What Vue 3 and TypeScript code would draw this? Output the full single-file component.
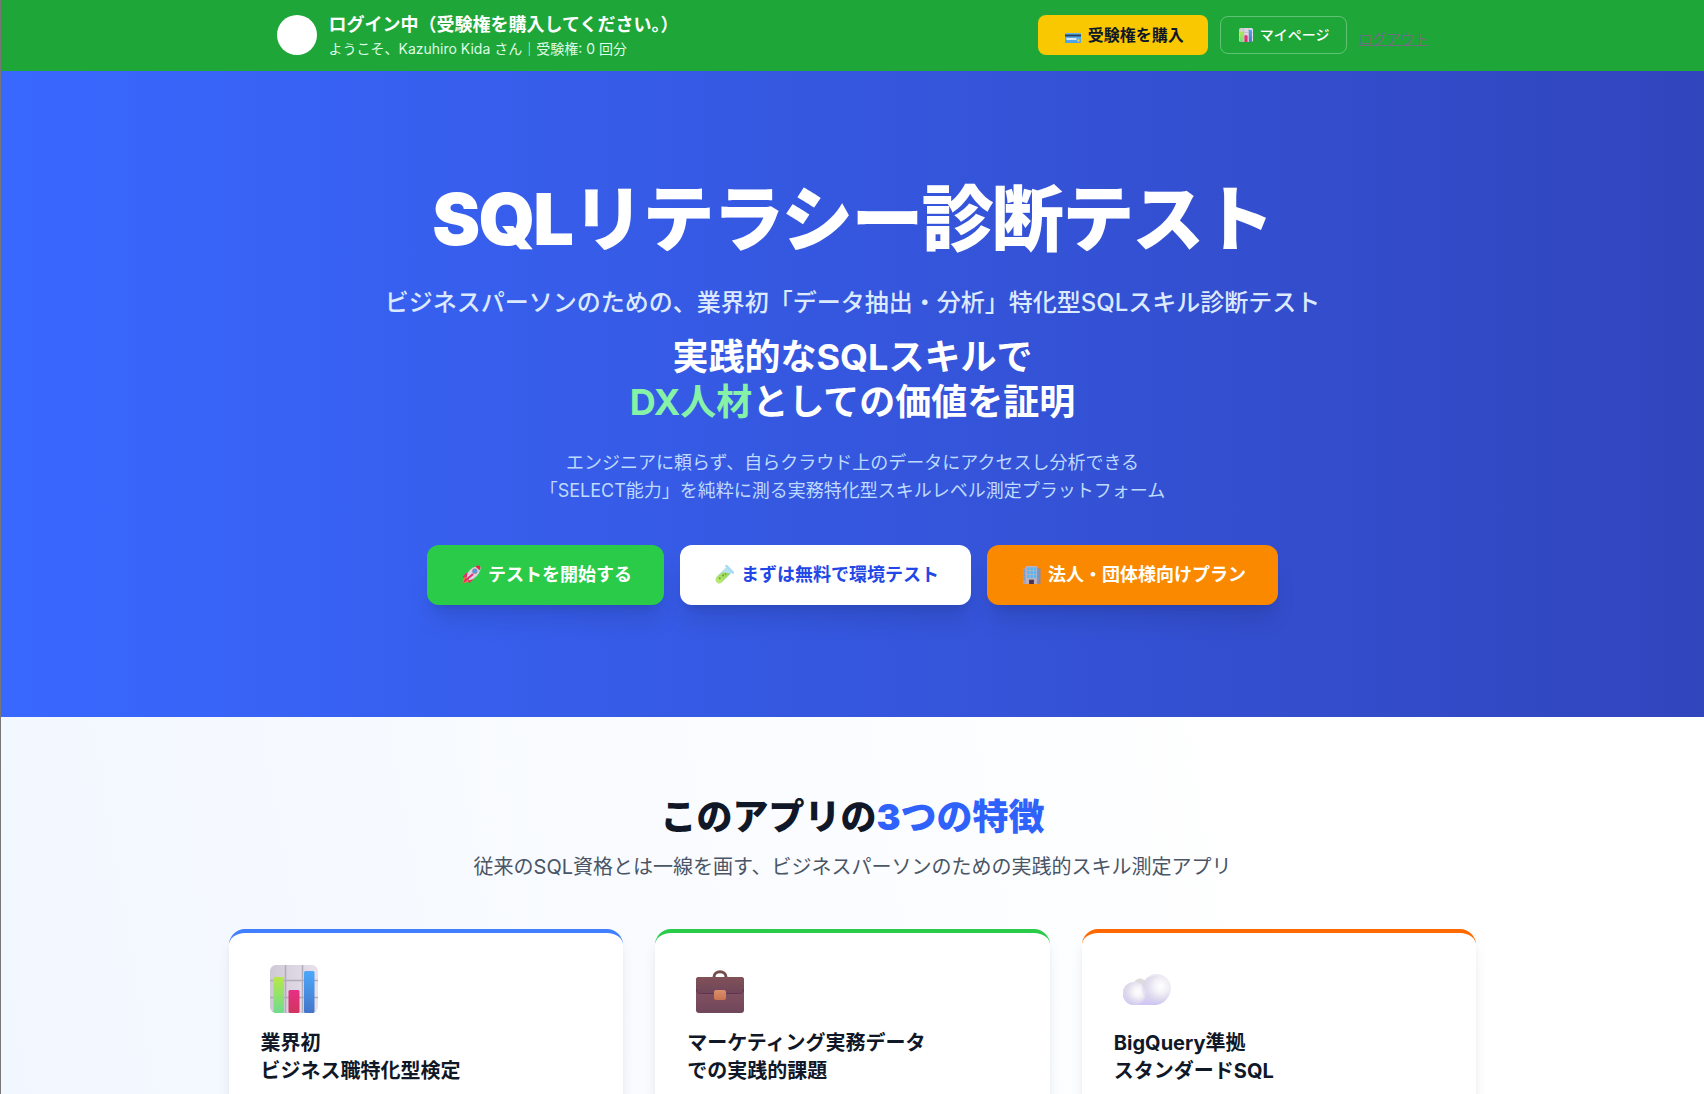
<script setup lang="ts">
interface Feature {
  icon: string
  tone: string
  lines: string[]
}

const userName = 'Kazuhiro Kida'
const tickets = 0

const actions = [
  { icon: 'rocket', tone: 'start', label: 'テストを開始する' },
  { icon: 'tube', tone: 'trial', label: 'まずは無料で環境テスト' },
  { icon: 'office', tone: 'corporate', label: '法人・団体様向けプラン' },
]

const features: Feature[] = [
  { icon: 'chart', tone: 'blue', lines: ['業界初', 'ビジネス職特化型検定'] },
  { icon: 'briefcase', tone: 'green', lines: ['マーケティング実務データ', 'での実践的課題'] },
  { icon: 'cloud', tone: 'orange', lines: ['BigQuery準拠', 'スタンダードSQL'] },
]
</script>

<template>
  <div class="page">
    <svg class="sprite" aria-hidden="true">
      <defs>
        <linearGradient id="g-lime" x1="0" y1="0" x2="0" y2="1"><stop offset="0" stop-color="#b6e84a" /><stop offset="1" stop-color="#6fdc8c" /></linearGradient>
        <linearGradient id="g-pink" x1="0" y1="0" x2="0" y2="1"><stop offset="0" stop-color="#e82f85" /><stop offset="1" stop-color="#d0355f" /></linearGradient>
        <linearGradient id="g-sky" x1="0" y1="0" x2="0" y2="1"><stop offset="0" stop-color="#4ca8fa" /><stop offset="1" stop-color="#4475c9" /></linearGradient>
        <linearGradient id="g-panel" x1="0" y1="0" x2="1" y2="0"><stop offset="0" stop-color="#cfc8d6" /><stop offset="1" stop-color="#e9e2ee" /></linearGradient>
        <linearGradient id="g-flap" x1="0" y1="0" x2="0" y2="1"><stop offset="0" stop-color="#815158" /><stop offset="1" stop-color="#6f465a" /></linearGradient>
        <linearGradient id="g-bag" x1="0" y1="0" x2="0" y2="1"><stop offset="0" stop-color="#7d4d58" /><stop offset=".4" stop-color="#80505f" /><stop offset="1" stop-color="#70465b" /></linearGradient>
        <linearGradient id="g-clasp" x1="0" y1="0" x2="0" y2="1"><stop offset="0" stop-color="#d98f6d" /><stop offset="1" stop-color="#c9744f" /></linearGradient>
        <linearGradient id="g-cloud" x1="0" y1="0" x2="0" y2="1"><stop offset="0" stop-color="#dedde0" /><stop offset=".55" stop-color="#e0ddeb" /><stop offset="1" stop-color="#cfc5f4" /></linearGradient>
        <radialGradient id="g-puff" cx=".65" cy=".42" r=".58"><stop offset="0" stop-color="#ffffff" /><stop offset=".45" stop-color="#f2f0f6" /><stop offset="1" stop-color="#d8d2ec" stop-opacity=".5" /></radialGradient>
        <linearGradient id="g-card" x1="0" y1="0" x2="0" y2="1"><stop offset="0" stop-color="#62b5f2" /><stop offset="1" stop-color="#4ba3e8" /></linearGradient>
        <linearGradient id="g-tube" x1="1" y1="0" x2="0" y2="1"><stop offset="0" stop-color="#8ed35a" /><stop offset="1" stop-color="#c3ed75" /></linearGradient>
      </defs>
      <symbol id="chart" viewBox="0 0 48 48">
        <rect width="48" height="48" rx="6" fill="url(#g-panel)" />
        <path d="M15.500 0V48M32.500 0V48M0 15.500H48M0 32.500H48" stroke="#b2acb8" stroke-width="1.500" />
        <rect x="3.500" y="12" width="10.500" height="36" rx="1.500" fill="url(#g-lime)" />
        <rect x="18.500" y="25" width="11" height="23" rx="1.500" fill="url(#g-pink)" />
        <rect x="34" y="6" width="10.500" height="42" rx="1.500" fill="url(#g-sky)" />
      </symbol>
      <symbol id="briefcase" viewBox="0 0 48 48">
        <path d="M18 13v-1c0-7 12-7 12 0v1" fill="none" stroke="#764d4d" stroke-width="3" />
        <rect y="12" width="48" height="36" rx="3" fill="url(#g-bag)" />
        <path d="M3 12h42a3 3 0 0 1 3 3v9q0 4-4 4H4q-4 0-4-4v-9a3 3 0 0 1 3-3z" fill="url(#g-flap)" />
        <path d="M.5 24q0 4.500 4 4.500h39q4 0 4-4.500" fill="none" stroke="#633352" stroke-width="1" />
        <rect x="18" y="25" width="12" height="10" rx="2" fill="url(#g-clasp)" />
      </symbol>
      <symbol id="cloud" viewBox="0 0 48 48">
        <circle cx="17" cy="20" r="6.500" fill="#dddbdc" />
        <path d="M11 40a11.500 11.500 0 0 1 0-23q4 0 8 2a14.500 14.500 0 1 1 14.500 21z" fill="url(#g-cloud)" />
        <circle cx="11.500" cy="28.500" r="11.500" fill="url(#g-puff)" />
        <circle cx="33.500" cy="23.500" r="14.500" fill="url(#g-puff)" />
      </symbol>
      <symbol id="card" viewBox="0 0 16 10">
        <rect width="16" height="10" rx="1" fill="url(#g-card)" />
        <path d="M0 1.500h16v2H0z" fill="#29415b" />
        <path d="M1.500 5h10v2h-10z" fill="#d5e7f3" />
        <circle cx="13.500" cy="7.500" r="1.200" fill="#f4cd45" />
      </symbol>
      <symbol id="rocket" viewBox="0 0 20 20">
        <path d="M5 8 1 12l1 2 5-2zM12 15l-4 4-2-1 2-5z" fill="#e62d70" />
        <path d="M3 13q3-1 4 4-3 2-6.500 2Q1 15 3 13z" fill="#f98235" />
        <path d="M3.500 14q2 0 2 2.500L1 19z" fill="#e92d67" />
        <path d="M5 13q0-9 11-12 2-.5 3 .5 1 1 .5 3Q17 14 8 16z" fill="#d9d2df" />
        <path d="M14 1.500q3-1.500 5-.5 1 2-.5 4.500z" fill="#df2749" />
        <path d="m4 16 7-6" stroke="#e52e76" stroke-width="2.200" stroke-linecap="round" />
        <circle cx="13.500" cy="6.500" r="2.700" fill="#8c86a0" />
        <circle cx="13.500" cy="6.500" r="1.900" fill="#479df0" />
      </symbol>
      <symbol id="tube" viewBox="0 0 20 20">
        <path d="m12 2 6 6L7 18.500Q3.500 20.500 1.500 18T2 12z" fill="#b9dff3" />
        <path d="M8 7.500 16 9 7 18.500Q3.500 20.500 1.500 18T2 12z" fill="url(#g-tube)" />
        <path d="m12 1 7 7" stroke="#a7d9fa" stroke-width="2.500" stroke-linecap="round" />
        <circle cx="5" cy="14" r="1" fill="#679d2d" /><circle cx="8.500" cy="11" r="1" fill="#679d2d" /><circle cx="11" cy="9.500" r=".8" fill="#679d2d" />
      </symbol>
      <symbol id="office" viewBox="0 0 20 20">
        <path d="M1 3.500h4V20H1z" fill="#aaa2b8" /><path d="M15 3.500h4.500V20H15z" fill="#9188a4" />
        <path d="M4 1h12v19H4z" fill="#b9afc1" />
        <path d="M5.500 2.500h2.500v3H5.500zm3.500 0h2.500v3H9zm3.500 0H15v3h-2.500zm-7 4h2.500v3H5.500zm3.500 0h2.500v3H9zm3.500 0H15v3h-2.500zm-7 4h2.500v3H5.500zm3.500 0h2.500v3H9zm3.500 0H15v3h-2.500z" fill="#4eb9f5" />
        <path d="M1.500 5h1.500v3H1.500zm0 4h1.500v3H1.500zm0 4h1.500v3H1.500zM17 5h1.500v3H17zm0 4h1.500v3H17zm0 4h1.500v3H17z" fill="#6a9ed2" />
        <path d="M7.500 15.500h5V20h-5z" fill="#4b3449" />
      </symbol>
    </svg>

    <header class="topbar">
      <div class="topbar-inner">
        <div class="user">
          <span class="avatar"></span>
          <div>
            <p class="status">ログイン中（受験権を購入してください。）</p>
            <p class="welcome">ようこそ、{{ userName }} さん｜受験権: {{ tickets }} 回分</p>
          </div>
        </div>
        <nav class="menu">
          <a class="buy" href="#buy"><svg class="icon-card" aria-hidden="true"><use href="#card" /></svg>受験権を購入</a>
          <a class="mypage" href="#mypage"><svg class="icon-chart" aria-hidden="true"><use href="#chart" /></svg>マイページ</a>
          <a class="logout" href="#logout">ログアウト</a>
        </nav>
      </div>
    </header>

    <main>
      <section class="hero">
        <h1>SQLリテラシー診断テスト</h1>
        <p class="lead">ビジネスパーソンのための、業界初「データ抽出・分析」特化型SQLスキル診断テスト</p>
        <h2>実践的なSQLスキルで<br /><span class="mint">DX人材</span>としての価値を証明</h2>
        <p class="note">エンジニアに頼らず、自らクラウド上のデータにアクセスし分析できる<br />「SELECT能力」を純粋に測る実務特化型スキルレベル測定プラットフォーム</p>
        <div class="actions">
          <button v-for="a in actions" :key="a.icon" type="button" :class="['action', a.tone]">
            <svg class="icon-action" aria-hidden="true"><use :href="'#' + a.icon" /></svg>{{ a.label }}
          </button>
        </div>
      </section>

      <section class="features">
        <h2>このアプリの<span class="accent">3つの特徴</span></h2>
        <p class="sub">従来のSQL資格とは一線を画す、ビジネスパーソンのための実践的スキル測定アプリ</p>
        <div class="cards">
          <article v-for="f in features" :key="f.icon" :class="['card', f.tone]">
            <svg class="icon-feature" aria-hidden="true"><use :href="'#' + f.icon" /></svg>
            <h3>{{ f.lines[0] }}<br />{{ f.lines[1] }}</h3>
          </article>
        </div>
      </section>
    </main>
  </div>
</template>

<style>
body {
  margin: 0;
}
</style>

<style scoped>
.page {
  border-left: 1px solid #777777;
  font-family: Inter, "Noto Sans CJK JP", sans-serif;
  color: #101828;
}
.sprite {
  position: absolute;
  width: 0;
  height: 0;
}
h1, h2, h3, p {
  margin: 0;
}
a {
  text-decoration: none;
}
.topbar {
  background: #1ea638;
  color: #ffffff;
}
.topbar-inner {
  display: flex;
  align-items: center;
  justify-content: space-between;
  max-width: 1152px;
  margin: 0 auto;
  padding: 11px 16px 12px;
}
.user, .menu {
  display: flex;
  align-items: center;
  gap: 12px;
  white-space: nowrap;
}
.avatar {
  width: 40px;
  height: 40px;
  border-radius: 50%;
  background: #ffffff;
}
.status {
  font-size: 18px;
  line-height: 28px;
  font-weight: 700;
}
.welcome {
  font-size: 14px;
  line-height: 20px;
  color: #dcfce7;
}
.buy {
  padding: 8px 24px;
  border-radius: 8px;
  background: #f9c800;
  color: #101828;
  font-size: 16px;
  line-height: 24px;
  font-weight: 700;
}
.icon-card {
  width: 16px;
  height: 10px;
  margin: 0 7px 0 3px;
  vertical-align: -2px;
}
.mypage {
  padding: 8px 16px;
  border: 1px solid rgba(255, 255, 255, 0.3);
  border-radius: 8px;
  color: #ffffff;
  font-size: 14px;
  line-height: 20px;
  font-weight: 500;
}
.icon-chart {
  width: 14px;
  height: 14px;
  margin: 0 7px 0 2px;
  vertical-align: -2px;
}
.logout {
  padding-top: 8px;
  font-size: 14px;
  line-height: 20px;
  color: #6f6f80;
  text-decoration: underline;
}
.hero {
  padding: 112px 16px;
  text-align: center;
  color: #ffffff;
  background: linear-gradient(to right, #3968ff, #3145bd);
}
.hero h1 {
  font-size: 72px;
  line-height: 72px;
  font-weight: 900;
  letter-spacing: -0.025em;
}
.lead {
  margin-top: 32px;
  font-size: 24px;
  line-height: 32px;
  font-weight: 500;
  color: #dbeafe;
}
.hero h2 {
  margin-top: 16px;
  font-size: 36px;
  line-height: 45px;
  font-weight: 700;
}
.mint {
  color: #86f2a8;
}
.note {
  margin-top: 24px;
  font-size: 18px;
  line-height: 28px;
  color: #bedbff;
}
.actions {
  display: flex;
  flex-wrap: wrap;
  justify-content: center;
  gap: 16px;
  margin-top: 40px;
}
.action {
  padding: 16px 32px;
  border: 0;
  border-radius: 12px;
  font-family: inherit;
  font-size: 18px;
  line-height: 28px;
  font-weight: 700;
  color: #ffffff;
  box-shadow: 0 20px 25px -5px rgba(0, 0, 0, 0.1), 0 8px 10px -6px rgba(0, 0, 0, 0.1);
}
.start {
  background: #29cb49;
}
.trial {
  background: #ffffff;
  color: #2347e6;
}
.corporate {
  background: #fb8900;
}
.icon-action {
  width: 19px;
  height: 19px;
  margin: 0 7px 0 3px;
  vertical-align: -3px;
}
.features {
  padding: 80px 16px;
  text-align: center;
  background: linear-gradient(80deg, #f2f7ff, #ffffff 75%);
}
.features h2 {
  font-size: 36px;
  line-height: 40px;
  font-weight: 900;
}
.accent {
  color: #2f62fb;
}
.sub {
  margin-top: 16px;
  font-size: 20px;
  line-height: 28px;
  color: #4a5565;
}
.cards {
  display: grid;
  grid-template-columns: repeat(3, 1fr);
  gap: 32px;
  max-width: 1248px;
  margin: 48px auto 0;
  text-align: left;
}
.card {
  padding: 32px;
  border-top: 4px solid;
  border-radius: 16px;
  background: #ffffff;
  box-shadow: 0 10px 15px -3px rgba(0, 0, 0, 0.1), 0 4px 6px -4px rgba(0, 0, 0, 0.1);
}
.card.blue {
  border-color: #4080ff;
}
.card.green {
  border-color: #29cb49;
}
.card.orange {
  border-color: #ff6900;
}
.icon-feature {
  display: block;
  width: 48px;
  height: 48px;
  margin: 0 0 16px 9px;
}
.card h3 {
  font-size: 20px;
  line-height: 28px;
  font-weight: 700;
  color: #101828;
}
</style>
